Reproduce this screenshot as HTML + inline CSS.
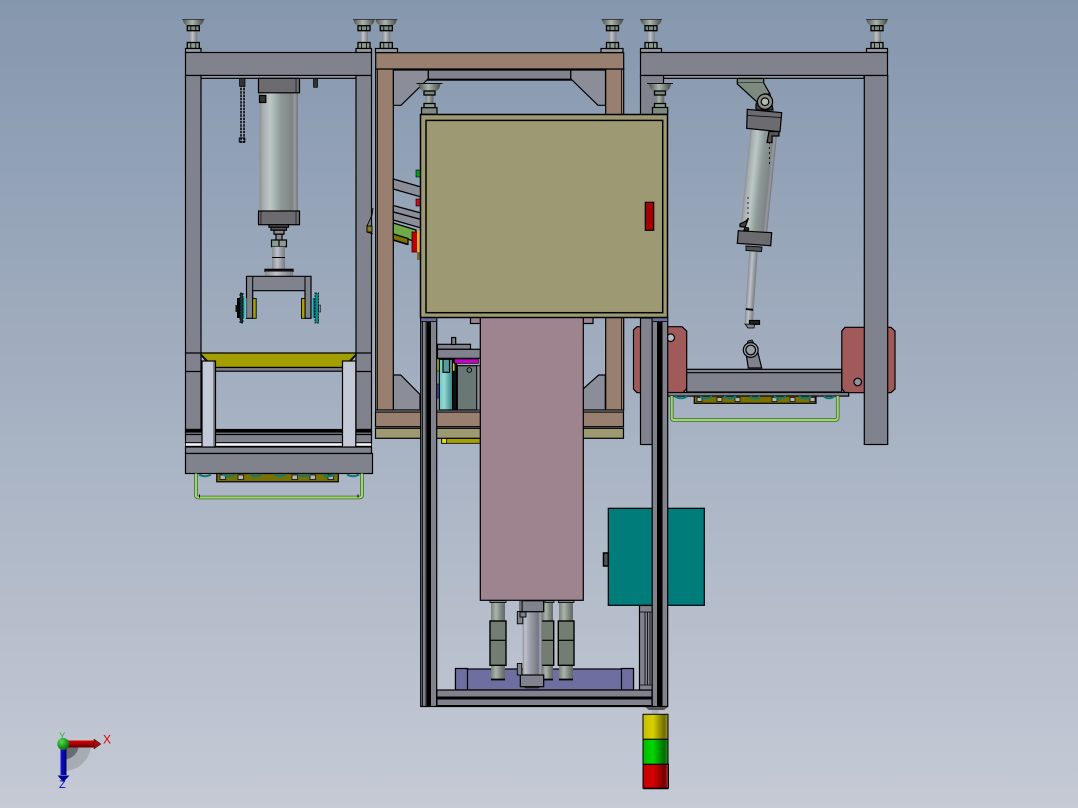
<!DOCTYPE html>
<html><head><meta charset="utf-8"><style>
html,body{margin:0;padding:0;width:1078px;height:808px;overflow:hidden;background:#a5aebf}
svg{display:block}
text{font-family:"Liberation Sans",sans-serif}
</style></head><body>
<svg width="1078" height="808" viewBox="0 0 1078 808" xmlns="http://www.w3.org/2000/svg">
<defs>
<linearGradient id="bg" x1="0" y1="0" x2="0" y2="1"><stop offset="0" stop-color="#8597ae"/><stop offset="1" stop-color="#c5cad5"/></linearGradient>
<linearGradient id="cyl" x1="0" y1="0" x2="1" y2="0"><stop offset="0" stop-color="#8d9192"/><stop offset=".1" stop-color="#a9aeb0"/><stop offset=".28" stop-color="#bcc8c6"/><stop offset=".55" stop-color="#8d9a98"/><stop offset=".85" stop-color="#7e8484"/><stop offset=".92" stop-color="#9a9aa2"/><stop offset="1" stop-color="#72727c"/></linearGradient>
<linearGradient id="rod" x1="0" y1="0" x2="1" y2="0"><stop offset="0" stop-color="#8a8b92"/><stop offset=".4" stop-color="#c0c2ca"/><stop offset=".8" stop-color="#8f9098"/><stop offset="1" stop-color="#7a7b83"/></linearGradient>
<linearGradient id="grod" x1="0" y1="0" x2="1" y2="0"><stop offset="0" stop-color="#77807a"/><stop offset=".35" stop-color="#a9b5aa"/><stop offset=".8" stop-color="#727a74"/><stop offset="1" stop-color="#62686a"/></linearGradient>
<linearGradient id="crod" x1="0" y1="0" x2="1" y2="0"><stop offset="0" stop-color="#8a8c98"/><stop offset=".12" stop-color="#c0c2cc"/><stop offset=".35" stop-color="#9da1ac"/><stop offset=".8" stop-color="#747681"/><stop offset=".9" stop-color="#a5a7b2"/><stop offset="1" stop-color="#6f7079"/></linearGradient>
<linearGradient id="dish" x1="0" y1="0" x2="1" y2="0"><stop offset="0" stop-color="#4e5650"/><stop offset=".45" stop-color="#aab4ac"/><stop offset="1" stop-color="#454b47"/></linearGradient>
<linearGradient id="cyan" x1="0" y1="0" x2="1" y2="0"><stop offset="0" stop-color="#6cc4bc"/><stop offset=".35" stop-color="#92dcd4"/><stop offset="1" stop-color="#3a7c80"/></linearGradient>
<linearGradient id="yl" x1="0" y1="0" x2="1" y2="0"><stop offset="0" stop-color="#c4bb00"/><stop offset=".4" stop-color="#d8d000"/><stop offset=".85" stop-color="#706c00"/><stop offset="1" stop-color="#9c9a30"/></linearGradient>
<linearGradient id="gn" x1="0" y1="0" x2="1" y2="0"><stop offset="0" stop-color="#00b800"/><stop offset=".4" stop-color="#00d800"/><stop offset=".85" stop-color="#006c00"/><stop offset="1" stop-color="#2f8a30"/></linearGradient>
<linearGradient id="rd" x1="0" y1="0" x2="1" y2="0"><stop offset="0" stop-color="#c00000"/><stop offset=".4" stop-color="#d80000"/><stop offset=".85" stop-color="#700000"/><stop offset="1" stop-color="#a03038"/></linearGradient>
<linearGradient id="ar" x1="0" y1="0" x2="0" y2="1"><stop offset="0" stop-color="#e00000"/><stop offset="1" stop-color="#600000"/></linearGradient>
<linearGradient id="ab" x1="0" y1="0" x2="1" y2="0"><stop offset="0" stop-color="#1010e0"/><stop offset="1" stop-color="#000070"/></linearGradient>
<radialGradient id="ag" cx=".35" cy=".3" r=".8"><stop offset="0" stop-color="#50e050"/><stop offset="1" stop-color="#006000"/></radialGradient>
<g id="foot" stroke="#000" stroke-width="1.300">
<rect x="-4" y="10" width="8" height="13.500" fill="url(#rod)" stroke="none"/>
<path d="M-10.500 0H10.500Q10 4.500 6.500 6H-6.500Q-10 4.500 -10.500 0Z" fill="url(#dish)" stroke="none"/>
<path d="M-11 0H11" stroke="#222" stroke-width=".8"/>
<rect x="-6" y="6.200" width="12" height="5" fill="#7c8a80"/>
<rect x="-6" y="23" width="12" height="6" fill="#8c9a90"/>
<path d="M-2.500 23V29M2.500 23V29M-2.500 6V11M2.500 6V11" stroke-width=".8"/>
</g>
<g id="foot2" stroke="#000" stroke-width="1.300">
<rect x="-4" y="10" width="8" height="11" fill="url(#grod)" stroke="none"/>
<path d="M-11 0H11Q10.500 6 6.500 7.500H-6.500Q-10.500 6 -11 0Z" fill="url(#dish)" stroke="none"/>
<path d="M-13 0H13" stroke="#111" stroke-width=".9"/>
<rect x="-5.500" y="7.500" width="11" height="4" fill="#7c8a80"/>
<rect x="-5.500" y="20" width="11" height="4.500" fill="#8c9a90"/>
</g>
<g id="handle" fill="none">
<path d="M0 0V21.500Q0 24 2.500 24H163.500Q166 24 166 21.500V0" stroke="#35542a" stroke-width="3.500"/>
<path d="M0 0V21.500Q0 24 2.500 24H163.500Q166 24 166 21.500V0" stroke="#9ad868" stroke-width="2.200"/>
</g>
</defs>
<rect width="1078" height="808" fill="url(#bg)"/>

<!-- LEFT FRAME -->
<g stroke="#000" stroke-width="1.200">
<use href="#foot" x="193.300" y="19.500"/><use href="#foot" x="364" y="19.500"/><use href="#foot" x="386.300" y="19.500"/>
<rect x="185.500" y="48.500" width="15.500" height="4" fill="#9a9ca6"/>
<rect x="356" y="48.500" width="15.500" height="4" fill="#9a9ca6"/>
<rect x="375.500" y="48.500" width="22" height="4" fill="#9a9ca6"/>
<rect x="185.500" y="52.500" width="186" height="23" fill="#80828e"/>
<rect x="200.500" y="75.500" width="155.500" height="2.800" fill="#a0a4b0"/>
<rect x="185.500" y="75.500" width="15.500" height="354" fill="#80828e"/>
<rect x="356" y="75.500" width="15.500" height="354" fill="#80828e"/>
<path d="M185.500 353H201M356 353H371.500M185.500 371.500H201M356 371.500H371.500" fill="none"/>
<!-- cylinder -->
<rect x="259.500" y="92.500" width="38.500" height="118.500" fill="url(#cyl)" stroke="none"/>
<rect x="258.500" y="78.300" width="41" height="14.500" fill="#6c6c70"/>
<rect x="258.500" y="211" width="41" height="13.700" fill="#6c6c70"/>
<path d="M296 78.500V92.500M296 211V224.500M261 211V224.500" stroke-width=".6"/>
<rect x="259.500" y="95.500" width="6.300" height="7" fill="#333"/>
<rect x="269" y="224.700" width="19.500" height="2.500" fill="#555"/>
<rect x="271" y="227.200" width="15.500" height="3" fill="#555"/>
<rect x="274" y="230.200" width="10" height="4" fill="#8b8c92"/>
<rect x="276" y="234.200" width="6" height="6" fill="#8b8c92"/>
<rect x="271.500" y="240" width="15" height="6.700" fill="#8c9a90"/>
<path d="M279 240V246.700"/>
<rect x="272" y="246.700" width="13" height="22.600" fill="url(#rod)" stroke="none"/>
<path d="M272 257.500H285" stroke-width="1"/>
<rect x="265" y="269.300" width="28" height="2.200" fill="#111"/>
<rect x="265" y="271.500" width="28" height="4.800" fill="url(#rod)" stroke="none"/>
<!-- yoke -->
<path d="M246.500 276.300H311V318.300H305V290.700H252.700V318.300H246.500Z" fill="#80828e"/>
<path d="M252.700 276.300V290.700M305 276.300V290.700" stroke-width="1"/>
<rect x="252.700" y="298.500" width="3.500" height="19.800" fill="#a8a000" stroke-width=".9"/>
<rect x="301.500" y="298.500" width="3.500" height="19.800" fill="#a8a000" stroke-width=".9"/>
</g>
<!-- sprockets -->
<rect x="237" y="298" width="6.500" height="20" fill="#000"/>
<rect x="235.500" y="305" width="2" height="7" fill="#111"/>
<rect x="240" y="293" width="3" height="30" fill="#0d3b3b" stroke="#000" stroke-width=".8" stroke-dasharray="2 1"/>
<rect x="244" y="298" width="1.200" height="20" fill="#0cc"/>
<rect x="245.300" y="298" width="1.200" height="20" fill="#a0b0b0"/>
<rect x="312" y="298" width="1.200" height="20" fill="#0cc"/>
<rect x="313.500" y="298" width="1.200" height="20" fill="#223"/>
<rect x="315" y="293" width="3.600" height="30" fill="#0a8a8a" stroke="#000" stroke-width=".8" stroke-dasharray="2 1"/>
<rect x="318.600" y="305" width="2" height="7" fill="#8a8c92" stroke="#000" stroke-width=".5"/>
<!-- chain -->
<path d="M241 78V143M244 78V143" stroke="#000" stroke-width="1.500" stroke-dasharray="2.500 .8" fill="none"/>
<rect x="239.500" y="78.300" width="5.500" height="8" fill="#333" stroke="#000" stroke-width=".7"/>
<rect x="239.300" y="138" width="5.500" height="4" fill="none" stroke="#000" stroke-width="1"/>
<rect x="313.500" y="78.300" width="4" height="9" fill="#333" stroke="#000" stroke-width=".7"/>
<g stroke="#000" stroke-width="1.200">
<path d="M201 353H356V355L345 367.500H212L201 355Z" fill="#a39d00"/>
<path d="M201 354L208 361M356 354L349 361" stroke-width=".7"/>
<rect x="212" y="367.500" width="133" height="3.700" fill="#80828e"/>
<rect x="185.500" y="429.500" width="186" height="2.500" fill="#000"/>
<rect x="185.500" y="432" width="186" height="2.500" fill="#80828e"/>
<rect x="185.500" y="434.500" width="186" height="8.300" fill="#80828e"/>
<rect x="185.500" y="442.800" width="186" height="3.400" fill="#f4f4f8" stroke-width=".8"/>
<rect x="185.500" y="447" width="186" height="6.500" fill="#80828e"/>
<rect x="185.500" y="453.500" width="187" height="20" fill="#80828e"/>
<rect x="202" y="361" width="13.500" height="86" fill="#c4c9d8"/><path d="M214 361V447" stroke-width=".7"/>
<rect x="342.500" y="361" width="13.300" height="86" fill="#c4c9d8"/>
<rect x="216.800" y="473.500" width="121.500" height="8.300" fill="#7a7000"/>
</g>
<g fill="#b0b4bc" stroke="#000" stroke-width=".7">
<rect x="220" y="475" width="5.500" height="4.500"/><rect x="238" y="475" width="5.500" height="4.500"/><rect x="292" y="475" width="5.500" height="4.500"/><rect x="310" y="475" width="5.500" height="4.500"/><rect x="328" y="475" width="5.500" height="4.500"/>
</g>
<path d="M199 474.500Q205 478 211 474.500M223 474.500Q229 478 235 474.500M250 474.500Q256 478 262 474.500M274 474.500Q280 478 286 474.500M298 474.500Q304 478 310 474.500M323 474.500Q329 478 335 474.500M347 474.500Q353 478 359 474.500" stroke="#0a7c7c" stroke-width="2" fill="none"/>
<use href="#handle" x="196" y="473.500"/>
<path d="M199.500 494.500V497.500M358 494.500V497.500" stroke="#000" stroke-width="1"/>

<!-- RIGHT FRAME -->
<g stroke="#000" stroke-width="1.200">
<use href="#foot" x="651" y="19.500"/><use href="#foot" x="877" y="19.500"/>
<rect x="640.500" y="48.500" width="21" height="4" fill="#9a9ca6"/>
<rect x="866.500" y="48.500" width="21" height="4" fill="#9a9ca6"/>
<rect x="640.500" y="52.500" width="247" height="23" fill="#80828e"/>
<rect x="663.500" y="75.500" width="200.500" height="2.800" fill="#a0a4b0"/>
<rect x="640.500" y="75.500" width="23" height="40" fill="#80828e"/>
<!-- red plates -->
<path d="M637 326.700H682L686.700 331V388.500L683 392.700H637L633.500 389V330Z" fill="#a05a5a"/>
<path d="M845 327.300H891L895 331V389L891 392.700H845L841.800 388.500V331Z" fill="#a05a5a"/>
<rect x="640.500" y="318" width="12" height="126.500" fill="#80828e"/>
<rect x="864.300" y="75.500" width="23.400" height="369" fill="#80828e"/>
<circle cx="670.700" cy="337.700" r="3.800" fill="#b6bac4"/>
<circle cx="857.700" cy="382" r="3.800" fill="#8e929c"/>
<!-- tray -->
<rect x="686.700" y="369.300" width="155" height="22.700" fill="#80828e"/>
<path d="M686.700 372.700H841.700"/>
<rect x="667.700" y="392.500" width="181" height="3.600" fill="#80828e"/>
<rect x="694.300" y="396" width="121.700" height="7.300" fill="#7a7000"/>
</g>
<g fill="#b0b4bc" stroke="#000" stroke-width=".7">
<rect x="697" y="397.500" width="5" height="4"/><rect x="717" y="397.500" width="5" height="4"/><rect x="735" y="397.500" width="5" height="4"/><rect x="772" y="397.500" width="5" height="4"/><rect x="790" y="397.500" width="5" height="4"/><rect x="810" y="397.500" width="5" height="4"/>
</g>
<path d="M675 396.500Q681 400 687 396.500M700 396.500Q706 400 712 396.500M724 396.500Q730 400 736 396.500M750 396.500Q755 400 760 396.500M774 396.500Q780 400 786 396.500M799 396.500Q805 400 811 396.500M824 396.500Q829 400 834 396.500" stroke="#0a7c7c" stroke-width="2" fill="none"/>
<use href="#handle" x="671.700" y="396"/>
<!-- tilted cylinder -->
<g stroke="#000" stroke-width="1.200">
<path d="M737.300 78.500H763.700V83L769.500 93L758 103L737.300 84Z" fill="#7c8a80"/>
<path d="M737.300 82.500H763.700" stroke-width=".6"/>
<path d="M756 110V104L764 94H770L773 110Z" fill="#444"/>
<circle cx="765" cy="101.700" r="7.600" fill="#8a9088"/>
<circle cx="765" cy="101.700" r="3.800" fill="#b4bab2"/>
<g transform="translate(764.200 130.500) rotate(5.800)"><rect x="-13.800" y="0" width="27" height="101" fill="url(#cyl)" stroke="none"/></g>
<path d="M747.300 109.300L781.700 112.700L780 131.700L746.700 128.300Z" fill="#6c6c70"/>
<path d="M747.500 115.500L781.500 117.500" stroke-width=".8"/>
<path d="M769 131.500L767 142.500H772V136H779V131.500Z" fill="#555"/>
<path d="M769.500 142V165" stroke-width=".8" stroke-dasharray="2 3" fill="none"/>
<path d="M748.500 218L746 221L740 224V226.500L748.500 228V230H744Z" fill="#444"/>
<path d="M748 197V214" stroke-width=".8" stroke-dasharray="2 3" fill="none"/>
<path d="M738.300 230.700L771.700 232.700L770.700 245.700L737.300 243.300Z" fill="#6c6c70"/>
<path d="M746 246L762 247L761.500 251.500L746 250.500Z" fill="#555" stroke-width=".9"/>
<g transform="translate(753.500 252) rotate(3.900)"><rect x="-4.200" y="0" width="8.400" height="72" fill="url(#rod)" stroke="none"/></g>
<path d="M745.800 309L753 309.800" stroke-width="1.800"/>
<rect x="749.500" y="320.500" width="10" height="3.800" fill="#222"/>
<path d="M745 324L754.500 324.500L754 328H748Z" fill="#80828e" stroke-width=".8"/>
<path d="M752 340L756 347H746L748 341Z" fill="#555" stroke-width=".8"/>
<path d="M746 353H758L761.700 368H748.300Z" fill="#80828e"/>
<circle cx="750.700" cy="350" r="7.400" fill="#9aa0a8"/>
<circle cx="750.700" cy="350" r="4.800" fill="#9aa0a8"/>
</g>

<!-- BROWN FRAME -->
<g stroke="#000" stroke-width="1.200">
<path d="M393.300 70H428.300V79.300H570.700V70H605.500V105.300H598L572 80H427L401 105.300H393.300Z" fill="#8b8d98"/>
<path d="M428.300 70H570.700V79.300H428.300Z" fill="#80828e"/>
<path d="M427 79.700H572" stroke-width="1.800"/>
<path d="M393.300 375H400.700L420 394.500V410H393.300Z" fill="#8b8d98"/>
<path d="M605.300 375H598.700L583 389V410H605.300Z" fill="#8b8d98"/>
<rect x="601" y="48.500" width="22" height="4" fill="#9a9ca6" />
<use href="#foot" x="612.500" y="19.500"/>
<rect x="375.700" y="69" width="17.600" height="341" fill="#987f6f"/>
<path d="M377.500 69V410" stroke-width=".8"/>
<rect x="605.700" y="69" width="18" height="341" fill="#987f6f"/>
<path d="M621.500 69V410" stroke-width=".8"/>
<rect x="375.700" y="52.700" width="248" height="16.300" fill="#987f6f"/>
<!-- yellow under -->
<rect x="441.700" y="438.300" width="38.600" height="5" fill="#a8a000" stroke-width=".8"/>
<rect x="441.700" y="438.300" width="5" height="5" fill="#e8e000" stroke-width=".8"/>
<rect x="375.500" y="410.300" width="248" height="1.500" fill="#f4f4f8" stroke-width=".8"/>
<rect x="375.500" y="412" width="248" height="14.700" fill="#987f6f"/>
<rect x="375.500" y="428.300" width="248" height="10" fill="#9d9a73"/>
<!-- side pieces -->
<path d="M393.300 179L421 187V197L393.300 189Z" fill="#8b8d98"/>
<path d="M393.300 205.500L421 213V219.500L393.300 212Z" fill="#8b8d98"/>
<path d="M393.300 212L421 219.500V228L393.300 220Z" fill="#8b8d98"/>
<path d="M393.300 223L416 230V242L393.300 234Z" fill="#6eaa4a"/>
<path d="M393.300 234L408 238.500V244.500L393.300 240Z" fill="#7d7200"/>
<path d="M408 244.500L393.300 240" stroke-width="1.600"/>
</g>
<rect x="412" y="232" width="6" height="20" fill="#c00000" stroke="#300" stroke-width=".8"/>
<rect x="417" y="231" width="3.400" height="21" fill="#e0b030"/>
<rect x="417" y="252" width="3" height="8" fill="#7a6a30"/>
<rect x="416" y="170" width="4.500" height="7" fill="#0a9a20" stroke="#000" stroke-width=".6"/>
<rect x="416" y="199" width="4.500" height="7" fill="#c01018" stroke="#000" stroke-width=".6"/>
<path d="M373 208L372 215L367 226V232L373 234M367 226H372" fill="none" stroke="#000" stroke-width=".9"/>
<rect x="367" y="226" width="5" height="6" fill="#8a7a20" stroke="#000" stroke-width=".9"/>

<!-- MID MECHANISM -->
<g stroke="#000" stroke-width="1.200">
<rect x="437.500" y="344.300" width="33" height="5" fill="#80828e"/>
<rect x="451.700" y="337.500" width="4" height="7" fill="#80828e"/>
<rect x="437.500" y="349.300" width="43" height="9" fill="#80828e"/>
<rect x="449" y="365" width="3" height="45" fill="#000"/>
<rect x="436.700" y="359" width="3" height="12" fill="#c8cc20" stroke-width=".5"/>
<rect x="436.700" y="384" width="3" height="14" fill="#5050c0" stroke-width=".5"/>
<rect x="439.300" y="359.300" width="13.400" height="50.700" fill="url(#cyan)"/>
<rect x="443" y="359.300" width="6.500" height="13" fill="#5a9c98"/>
<rect x="452.700" y="359.300" width="4" height="50.700" fill="#111"/>
<rect x="452.700" y="363" width="2" height="8" fill="#c8cc20" stroke-width=".4"/>
<rect x="454.300" y="359" width="24" height="4.300" fill="#cc00cc" stroke-width=".7"/>
<rect x="457.300" y="365.700" width="19.500" height="44.300" fill="#697874"/>
<circle cx="469.300" cy="370" r="2.300" fill="none" stroke-width=".9"/>
<rect x="476.800" y="365.700" width="3.500" height="44.300" fill="#8b8d98" stroke-width=".8"/>
</g>

<!-- BOTTOM CYLINDERS -->
<g stroke="#000" stroke-width="1.200">
<rect x="455.500" y="669" width="178" height="21" fill="#6e6fa0"/>
<path d="M455.500 668.500H467.500V690H455.500ZM621.500 668.500H633.500V690H621.500Z" fill="#6e6fa0"/>
<rect x="491" y="602" width="14" height="77" fill="url(#grod)" stroke="none"/>
<rect x="542" y="602" width="11" height="77" fill="url(#grod)" stroke="none"/>
<rect x="559" y="602" width="14" height="77" fill="url(#grod)" stroke="none"/>
<path d="M491 679.500H505M542 679.500H553M559 679.500H573" stroke-width="1.800"/>
<rect x="490" y="600.500" width="16" height="2" fill="#80828e" stroke-width=".8"/>
<rect x="545" y="600.500" width="9" height="2" fill="#80828e" stroke-width=".8"/>
<rect x="558.300" y="600.500" width="15.700" height="2" fill="#80828e" stroke-width=".8"/>
<rect x="490" y="621" width="16" height="44.300" fill="#747d72" stroke-width="1.400"/><path d="M490 640.300H506"/>
<rect x="541" y="621" width="12.700" height="44.300" fill="#747d72" stroke-width="1.400"/><path d="M541 640.300H553.700"/>
<rect x="558.300" y="621" width="15.700" height="44.300" fill="#747d72" stroke-width="1.400"/><path d="M558.300 640.300H574"/>
<rect x="522.700" y="611.700" width="19.500" height="63.300" fill="url(#crod)" stroke="none"/>
<rect x="522" y="600.700" width="21.700" height="11" fill="#80828e"/>
<rect x="520.300" y="675" width="23.400" height="11.700" fill="#80828e"/>
<rect x="525" y="686.700" width="14" height="1.300" fill="#222" stroke-width=".5"/>
<rect x="517.300" y="611.500" width="5.500" height="12.300" fill="#80828e" stroke-width=".9"/>
<rect x="520" y="612" width="6" height="5" fill="#80828e" stroke-width=".9"/>
<rect x="517.300" y="663.500" width="4.500" height="11.500" fill="#80828e" stroke-width=".9"/>
<path d="M520 600.700V612" stroke-width=".8"/>
<rect x="436.700" y="690" width="216" height="16.500" fill="#80828e"/>
<rect x="436.700" y="696.500" width="216" height="3" fill="#000" stroke="none"/>
<rect x="436.700" y="705" width="216" height="1.700" fill="#000" stroke="none"/>
<rect x="639.500" y="605.500" width="13" height="84.500" fill="#80828e"/>
<path d="M639.500 612H652.500M645 612V685M647.500 612V685M650 612V685M639.500 685H652.500" stroke-width=".8"/>
</g>

<!-- PINK + CABINET -->
<g stroke="#000" stroke-width="1.200">
<rect x="470.500" y="317" width="10" height="6.500" fill="#9d848e"/>
<rect x="583" y="317" width="10" height="6.500" fill="#9d848e"/>
<rect x="480.300" y="317" width="103" height="283.300" fill="#9d848e"/>
<rect x="608.300" y="508.300" width="96" height="97" fill="#007c7a"/>
<rect x="603.500" y="553" width="4.800" height="13" fill="#555" stroke-width="1.500"/>
<!-- rails -->
<rect x="420.700" y="317.500" width="16" height="389" fill="#80828c"/>
<path d="M422.500 317.500V706.500M426 317.500V706.500" stroke-width=".8"/>
<rect x="426.700" y="317.500" width="4.300" height="389" fill="#000" stroke="none"/>
<rect x="652.200" y="317.500" width="15.500" height="389" fill="#80828c"/>
<rect x="657" y="317.500" width="5.500" height="389" fill="#000" stroke="none"/>
<rect x="420.700" y="317.300" width="16" height="4.300" fill="#6a6c9d" stroke-width=".8"/>
<rect x="652.200" y="317.300" width="15.500" height="4.300" fill="#6a6c9d" stroke-width=".8"/>
<path d="M436.700 690V706.500M652 690V706.500"/>
<use href="#foot2" x="429.500" y="83.500"/>
<use href="#foot2" x="660" y="83.500"/>
<rect x="421.500" y="107.700" width="15.500" height="6.600" fill="#7c8a80"/>
<rect x="652.500" y="107.500" width="15.200" height="6.800" fill="#7c8a80"/>
<rect x="420.500" y="114.500" width="247" height="203" fill="#9d9a73" stroke-width="1.500"/>
<rect x="426" y="120.400" width="236.700" height="192.300" fill="#9d9a73" stroke-width="1.500"/>
<rect x="645.300" y="202.300" width="8.400" height="28" fill="#a80000"/>
</g>

<!-- STACK LIGHT -->
<g stroke="#000" stroke-width="1">
<path d="M645 707H668L664 710H649Z" fill="#555" stroke="none"/>
<rect x="651.700" y="710" width="7" height="4.300" fill="#b0b2ba" stroke="none"/>
<rect x="643" y="714.300" width="25" height="25" fill="url(#yl)"/>
<rect x="643" y="739.300" width="25" height="25" fill="url(#gn)"/>
<rect x="643" y="764.300" width="25.500" height="24" fill="url(#rd)"/>
<path d="M643.500 788.500H668" stroke-width="1.500"/>
</g>

<!-- AXES -->
<path d="M63.300 744H91A27 27 0 0 1 63.300 771Z" fill="#8e9094" opacity=".5"/>
<path d="M63.300 744H79A15.700 15.700 0 0 1 63.300 759.700Z" fill="#55575c" opacity=".75"/>
<rect x="63" y="740.500" width="32" height="7" fill="url(#ar)"/>
<path d="M94 739L101 744L94 749Z" fill="#a01010" stroke="#400" stroke-width=".5"/>
<rect x="60.500" y="744" width="6" height="31" fill="url(#ab)"/>
<path d="M57.500 775.500H69.500L63.300 782Z" fill="#000090"/>
<circle cx="63.300" cy="744" r="6" fill="url(#ag)"/>
<text x="103" y="743.500" font-size="12" fill="#e00000">X</text>
<text x="59" y="788" font-size="11" fill="#0000e0">Z</text>
<text x="59.300" y="739" font-size="9" fill="#10c010">Y</text>
</svg>
</body></html>
